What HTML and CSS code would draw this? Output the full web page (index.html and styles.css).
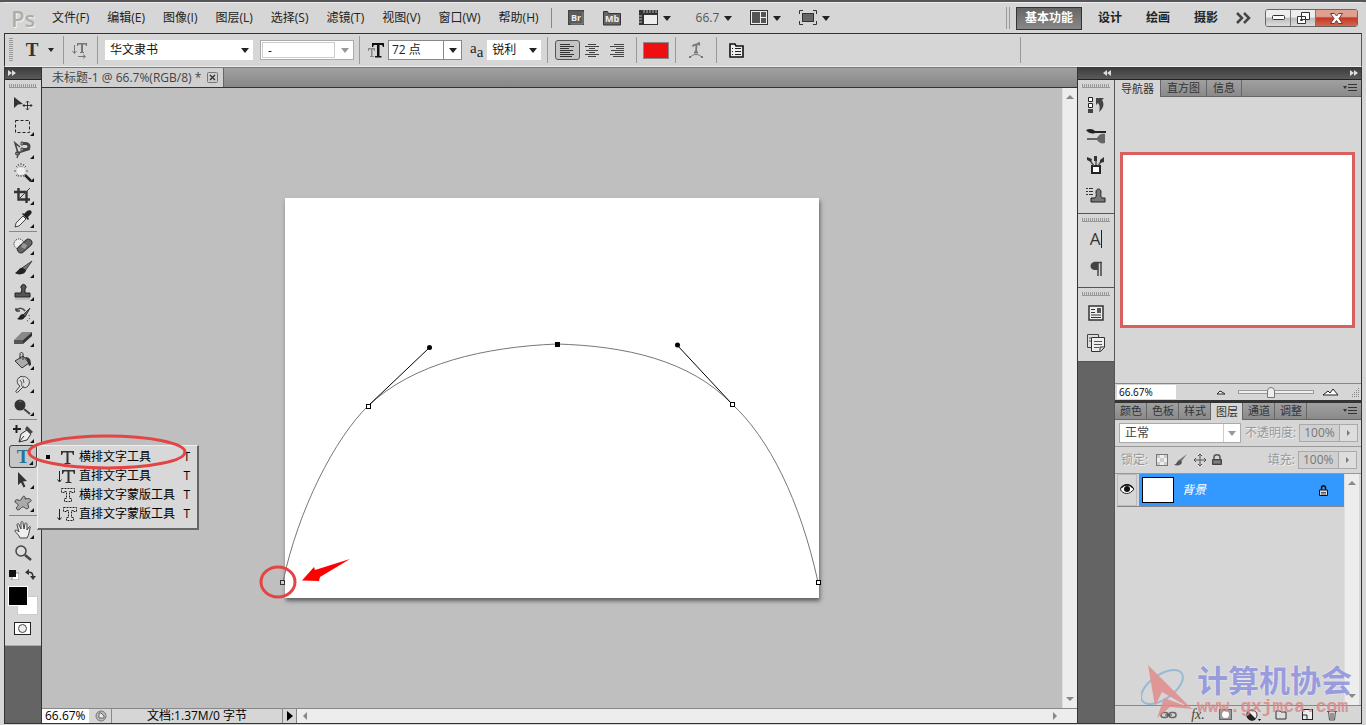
FILE: index.html
```html
<!DOCTYPE html>
<html lang="zh-CN">
<head>
  <meta charset="UTF-8">
  <meta name="viewport" content="width=device-width, initial-scale=1.0">
  <title>未标题-1 @ 66.7%(RGB/8) *</title>
  <link rel="stylesheet" href="styles.css">
</head>
<body>

  <header class="menubar">
    <span class="logo">Ps</span>
    <nav class="menus">
      <button>文件(F)</button>
      <button>编辑(E)</button>
      <button>图像(I)</button>
      <button>图层(L)</button>
      <button>选择(S)</button>
      <button>滤镜(T)</button>
      <button>视图(V)</button>
      <button>窗口(W)</button>
      <button>帮助(H)</button>
    </nav>
    <div class="app-tools">
      <button aria-label="Bridge"><svg width="16" height="16" viewBox="0 0 16 16"><rect x=".5" y=".5" width="15" height="14" fill="#5a5a5a" stroke="#444"/><path d="M15 2v12H3" fill="none" stroke="#8a8a8a"/><text x="3" y="11" class="badge-text">Br</text></svg></button>
      <button aria-label="Mini Bridge" class="mb"><svg width="18" height="16" viewBox="0 0 18 16"><path d="M.5 15V1.500h4l1 2h12V15z" fill="#666" stroke="#333"/><text x="2" y="12" class="badge-text">Mb</text></svg></button>
      <button aria-label="查看额外内容" class="drop ruler"><svg width="19" height="16" viewBox="0 0 19 16"><path d="M0 0h19v15H0z" fill="#333"/><path d="M5 5h13v9H5z" fill="#eee"/><path d="M5 0v3M8 0v3M11 0v3M14 0v3M17 0v3M0 6h3M0 9h3M0 12h3" stroke="#bbb"/></svg></button>
      <button class="drop zoom-level">66.7</button>
      <button aria-label="排列文档" class="drop"><svg width="18" height="16" viewBox="0 0 18 16"><rect x=".5" y=".5" width="17" height="14" fill="#eee" stroke="#333"/><path d="M2 2h8v11H2zM11 2h5v5h-5zM11 8h5v5h-5z" fill="#555"/></svg></button>
      <button aria-label="屏幕模式" class="drop"><svg width="18" height="16" viewBox="0 0 18 16"><rect x="3.500" y="3.500" width="11" height="8" fill="#666" stroke="#333"/><path d="M.5 4V.5H4M14 .5h3.500V4M17.500 11v3.500H14M4 14.500H.5V11" fill="none" stroke="#333"/></svg></button>
    </div>
    <div class="workspaces">
      <button class="active">基本功能</button>
      <button>设计</button>
      <button>绘画</button>
      <button>摄影</button>
      <button class="more" aria-label="更多"><svg width="15" height="12" viewBox="0 0 15 12"><path d="M1 1l5 5-5 5M8 1l5 5-5 5" fill="none" stroke="#444" stroke-width="2.500"/></svg></button>
    </div>
    <div class="window-buttons">
      <button aria-label="最小化"><svg width="13" height="6" viewBox="0 0 13 6"><rect x=".5" y=".5" width="12" height="4" rx="1" fill="#fff" stroke="#333"/></svg></button>
      <button aria-label="还原"><svg width="13" height="12" viewBox="0 0 13 12"><path d="M4.500.5h8v7h-8zM.5 4.500h8v7h-8z" fill="#fff" stroke="#333"/><path d="M3.500 7.500h2v1h-2z" fill="#fff" stroke="#333"/></svg></button>
      <button class="close" aria-label="关闭"><svg width="13" height="11" viewBox="0 0 13 11"><path d="M.5.5h4l2 2.500 2-2.500h4L9 5.500l3.500 5h-4l-2-3-2 3h-4L4 5.500z" fill="#fff" stroke="#6d3a34"/></svg></button>
    </div>
  </header>

  <section class="options">
    <i class="grip-v"></i>
    <button class="tool-preset drop" aria-label="文字工具"><span class="serif-t">T</span></button>
    <button class="orient" aria-label="更改文本方向"><svg width="17" height="17" viewBox="0 0 17 17"><path d="M2.500 3v8M.5 9l2 2.500 2-2.500M6 14.500h7M11 12.500l2.500 2-2.500 2" fill="none" stroke="#777"/><path d="M5 1h10v3h-1l-.5-1.500H11V10h1v1H8v-1h1V2.500H6.500L6 4H5z" fill="#777"/></svg></button>
    <label class="combo family"><select aria-label="字体"><option>华文隶书</option></select></label>
    <label class="combo face"><select aria-label="字体样式" disabled><option>-</option></select></label>
    <label class="size" for="fontSize"><svg width="17" height="15" viewBox="0 0 17 15"><path d="M4 0h12v4h-1l-1-2h-2.500v11h2v1.500H7V13h2V2H6L5 4H4z" fill="#111"/><path d="M0 5h7v3H6V6.500H4.500V13H6v1H2v-1h1V6.500H1V8H0z" fill="#888"/></svg></label>
    <div class="size-box"><input id="fontSize" value="72 点"><button aria-label="字号列表"></button></div>
    <span class="aa"><span>a</span><span>a</span></span>
    <label class="combo sharp"><select aria-label="消除锯齿"><option>锐利</option></select></label>
    <div class="aligns">
      <button class="on" aria-label="左对齐"><svg width="15" height="13" viewBox="0 0 15 13"><path d="M0 .5h10M0 2.500h14M0 4.500h9M0 6.500h13M0 8.500h10M0 10.500h14M0 12.500h12" stroke="#333"/></svg></button>
      <button aria-label="居中"><svg width="15" height="13" viewBox="0 0 15 13"><path d="M3 .5h8M0 2.500h14M4 4.500h6M1 6.500h12M4 8.500h6M0 10.500h14M3 12.500h8" stroke="#444"/></svg></button>
      <button aria-label="右对齐"><svg width="15" height="13" viewBox="0 0 15 13"><path d="M4 .5h10M0 2.500h14M6 4.500h8M1 6.500h13M5 8.500h9M0 10.500h14M3 12.500h11" stroke="#444"/></svg></button>
    </div>
    <div class="opt-cell"><button class="color" aria-label="文本颜色"></button></div>
    <div class="opt-cell"><button aria-label="变形文字"><svg width="16" height="17" viewBox="0 0 16 17"><path d="M4.500 4.500C6 2 9 3.500 11 1l.5 2.500M8.500 3L8 10M6 10.500h4" fill="none" stroke="#777" stroke-width="1.800"/><path d="M2 15.500c3-4 9-4 12 0" fill="none" stroke="#777"/><path d="M1 14h2v2H1zM13 14h2v2h-2z" fill="#777"/></svg></button></div>
    <div class="opt-cell last"><button aria-label="字符面板"><svg width="15" height="15" viewBox="0 0 15 15"><path d="M1 14V1h5l1 2h7v11z" fill="#eee" stroke="#111" stroke-width="1.600"/><path d="M3 5.500h1M3 8.500h1M3 11.500h1M6 5.500h6M6 8.500h6M6 11.500h6" stroke="#222"/></svg></button></div>
  </section>

  <main class="workspace">

    <aside class="toolbar">
      <div class="dark-head"><svg width="8" height="6" viewBox="0 0 8 6"><path d="M0 0l4 3-4 3zM4 0l4 3-4 3z" fill="#ddd"/></svg></div>
      <div class="tools">
        <i class="grip-h"></i>
        <button class="tool solo" aria-label="移动"><svg viewBox="0 0 20 20"><path d="M1 3l9 7-5 .5L1 14z" fill="#333"/><path d="M14.500 7v9M10 11.500h9M13 8.500l1.500-1.500L16 8.500M13 14.500l1.500 1.500 1.500-1.500M11.500 10L10 11.500l1.500 1.500M17.500 10l1.500 1.500-1.500 1.500" fill="none" stroke="#333"/></svg></button>
        <button class="tool" aria-label="选框"><svg viewBox="0 0 20 20"><rect x="2.500" y="3.500" width="14" height="12" fill="none" stroke="#222" stroke-dasharray="3 2"/></svg></button>
        <button class="tool" aria-label="套索"><svg viewBox="0 0 20 20"><path d="M7 7L2 3l3 10 12-4" fill="none" stroke="#444" stroke-width="1.600"/><path d="M5 12c-3 0-3 3 0 3 2-1 2-3 0-3M5 15l-1 3" fill="none" stroke="#444" stroke-width="1.300"/><path d="M8 2h5c6 0 6 9 0 9H8V8h5c2 0 2-3 0-3H8z" fill="#444"/><path d="M8 2h2v3H8zM8 8h2v3H8z" fill="#ccc" stroke="#444"/></svg></button>
        <button class="tool" aria-label="魔棒"><svg viewBox="0 0 20 20"><path d="M8 0v15M1 8h14M3 3l10 10M13 3L3 13M5 1l6 13M11 1L5 14" stroke="#555" stroke-dasharray="2 1"/><circle cx="8" cy="8" r="4" fill="#eee"/><path d="M12 12l6 6" stroke="#222" stroke-width="2.500"/></svg></button>
        <button class="tool" aria-label="裁剪"><svg viewBox="0 0 20 20"><path d="M5.500 2v11.500H17M1 6h12.500v11" fill="none" stroke="#333" stroke-width="2.400"/><path d="M6 13L17 2" stroke="#444"/></svg></button>
        <button class="tool" aria-label="吸管"><svg viewBox="0 0 20 20"><path d="M2 18l1-4 7-7 3 3-7 7z" fill="#eee" stroke="#444"/><path d="M9 5l6 6 1-1-1-2 3-3c2-3-1-5-4-3l-3 3-1-1z" fill="#222"/></svg></button>
        <hr>
        <button class="tool" aria-label="修复画笔"><svg viewBox="0 0 20 20"><circle cx="6" cy="8" r="5" fill="#eee" stroke="#222" stroke-dasharray="1 1"/><rect x="3" y="7" width="17" height="7" rx="3.500" fill="#666" stroke="#333" transform="rotate(-42 11 10)"/><path d="M8 11l4 2 2-4-4-2z" fill="#999"/></svg></button>
        <button class="tool" aria-label="画笔"><svg viewBox="0 0 20 20"><path d="M19 2l-10 7 3 3z" fill="#777" stroke="#444"/><path d="M10 9c-4-1-4 3-8 5 4 3 11 1 11-3z" fill="#222"/></svg></button>
        <button class="tool" aria-label="图章"><svg viewBox="0 0 20 20"><path d="M2 11h6l1-4a2.500 2.500 0 1 1 3 0l0 4h5v4H2z" fill="#555" stroke="#222"/><path d="M2 17h15" stroke="#aaa"/></svg></button>
        <button class="tool" aria-label="历史记录画笔"><svg viewBox="0 0 20 20"><path d="M3 6c3-4 7-3 9 0M3 6V3M3 6h4" fill="none" stroke="#444" stroke-width="1.500"/><path d="M17 3l-7 7 2 2z" fill="#666" stroke="#333"/><path d="M10 9c-3 0-3 3-6 5 4 2 8 0 8-3z" fill="#222"/><path d="M14 16c3-1 3-4 2-6" fill="none" stroke="#444" stroke-dasharray="1 2"/></svg></button>
        <button class="tool" aria-label="橡皮擦"><svg viewBox="0 0 20 20"><path d="M1 12l8-8h10l-9 8z" fill="#888"/><path d="M1 12h9v4H1z" fill="#555"/><path d="M10 12l9-8v4l-9 8z" fill="#333"/></svg></button>
        <button class="tool" aria-label="油漆桶"><svg viewBox="0 0 20 20"><path d="M2 10l8-5 6 7-7 5z" fill="#aaa" stroke="#333"/><path d="M7 8V3c0-2 3-2 3 0v6" fill="none" stroke="#333"/><path d="M12 6c4 0 6 2 6 8l-2 1-2-6z" fill="#333"/></svg></button>
        <button class="tool" aria-label="涂抹"><svg viewBox="0 0 20 20"><path d="M3 17l4-5c-4-2-3-8-1-8 1-2 3-2 4-1 2-1 3 0 4 1 3 1 3 6 1 8-2 2-4 2-5 1l-5 5c-1 1-3 0-2-1z" fill="#ddd" stroke="#444"/><path d="M7 6l2 3M10 5l1 4M9 9c-1 3 0 4 2 3" fill="none" stroke="#555"/></svg></button>
        <button class="tool" aria-label="减淡"><svg viewBox="0 0 20 20"><circle cx="7" cy="8" r="5.500" fill="#333"/><path d="M6 5c1-1 2-1 3 0" fill="none" stroke="#777"/><path d="M11 12l6 5" stroke="#444" stroke-width="2"/></svg></button>
        <hr>
        <button class="tool" aria-label="钢笔"><svg viewBox="0 0 20 20"><path d="M0 5h8M3.500 1v8" stroke="#222" stroke-width="2"/><path d="M6 18l2-8 6-4 4 4-4 6zM6 18l5-6" fill="#eee" stroke="#333"/><path d="M14 2l6 6-3 2-5-5z" fill="#444"/></svg></button>
        <div class="tool-group">
          <button class="tool picked" aria-label="文字"><span class="serif-t">T</span></button>
          <menu class="flyout">
            <li><button class="current"><i class="dot"></i><svg width="20" height="16" viewBox="0 0 20 16"><path d="M4 2h13v4h-1l-1-2.500h-3.500V14h2v1h-6v-1h2V3.500H6L5 6H4z" fill="#333"/></svg><span>横排文字工具</span><kbd>T</kbd></button></li>
            <li><button><i class="dot"></i><svg width="20" height="16" viewBox="0 0 20 16"><path d="M2.500 3v11M.5 11.500l2 2.500 2-2.500" fill="none" stroke="#222"/><path d="M5 2h13v4h-1l-1-2.500h-3.500V14h2v1h-6v-1h2V3.500H7L6 6H5z" fill="#333"/></svg><span>直排文字工具</span><kbd>T</kbd></button></li>
            <li><button><i class="dot"></i><svg width="20" height="16" viewBox="0 0 20 16"><path d="M4.500 1.500h13v4h-3v-1h-2v7h2v3h-7v-3h2v-7h-2v1h-3z" fill="#ddd" stroke="#222" stroke-dasharray="2 1"/></svg><span>横排文字蒙版工具</span><kbd>T</kbd></button></li>
            <li><button><i class="dot"></i><svg width="20" height="16" viewBox="0 0 20 16"><path d="M2.500 3v11M.5 11.500l2 2.500 2-2.500" fill="none" stroke="#222"/><path d="M6.500 1.500h13v4h-3v-1h-2v7h2v3h-7v-3h2v-7h-2v1h-3z" fill="#ddd" stroke="#222" stroke-dasharray="2 1"/></svg><span>直排文字蒙版工具</span><kbd>T</kbd></button></li>
          </menu>
          <svg class="ring" viewBox="0 0 160 36"><ellipse cx="80" cy="18" rx="78" ry="16" fill="none" stroke="#e34545" stroke-width="3"/></svg>
        </div>
        <button class="tool" aria-label="路径选择"><svg viewBox="0 0 20 20"><path d="M5 2l9 9-4 .5 2.500 5-2 1L8 12.500 5 15z" fill="#333"/></svg></button>
        <button class="tool" aria-label="自定形状"><svg viewBox="0 0 20 20"><path d="M9 5c1-3 4-2 3 1 3-1 7 0 6 2s-4 1-3 4c2 3-1 5-3 3s-3-1-5 1-5 0-3-2 1-3-1-4-1-4 2-3 3 0 4-2z" fill="#aaa" stroke="#444"/></svg></button>
        <hr>
        <button class="tool" aria-label="抓手"><svg viewBox="0 0 20 20"><path d="M7 18c-1-3-4-5-5-7 0-2 2-1 4 1L4 5c0-2 2-2 2 0l2 4V3c0-2 2-2 2 0l1 6 1-5c0-2 2-1 2 0v6l2-3c1-1 2 0 1 1-1 4-1 7-3 10z" fill="#eee" stroke="#444"/></svg></button>
        <button class="tool solo" aria-label="缩放"><svg viewBox="0 0 20 20"><circle cx="8" cy="8" r="5" fill="#ddd" stroke="#444" stroke-width="1.500"/><path d="M12 12l6 5" stroke="#444" stroke-width="2.500"/></svg></button>
        <div class="swatch-row">
          <button aria-label="默认颜色"><svg width="10" height="10" viewBox="0 0 10 10"><path d="M3 3h7v7H3z" fill="#fff" stroke="#888"/><path d="M0 0h7v7H0z" fill="#111"/></svg></button>
          <button aria-label="切换颜色"><svg width="11" height="11" viewBox="0 0 11 11"><path d="M2 3.500c5-1 6 1 6 5" fill="none" stroke="#333" stroke-width="1.500"/><path d="M4 0v6L0 3.500zM5 7h6l-3 4z" fill="#333"/></svg></button>
        </div>
        <div class="colors"><button class="fore" aria-label="前景色"></button><button class="back" aria-label="背景色"></button></div>
        <button class="mask" aria-label="快速蒙版"><svg width="17" height="13" viewBox="0 0 17 13"><rect x=".5" y=".5" width="16" height="12" fill="#fff" stroke="#222"/><circle cx="8.500" cy="6.500" r="4" fill="#eee" stroke="#444"/></svg></button>
      </div>
    </aside>

    <section class="document">
      <div class="tabs"><div class="doc-tab">未标题-1 @ 66.7%(RGB/8) *<button aria-label="关闭标签"><svg width="11" height="11" viewBox="0 0 11 11"><rect x=".5" y=".5" width="10" height="10" rx="1" fill="#ccc" stroke="#777"/><path d="M3 3l5 5M8 3L3 8" stroke="#333" stroke-width="1.400"/></svg></button></div></div>
      <div class="view">
        <div class="stage">
          <div class="paper">
            <svg class="path-layer" viewBox="0 0 534 400">
              <g fill="none" stroke="#777" stroke-width="1">
                <path d="M-2 384C13 312 50 240 83 208C128 165 200 149 272 146C340 148 405 162 447 206C484 240 515 302 533 384"/>
                <path d="M83 208L144 150M447 206L392 147" stroke="#000"/>
              </g>
              <circle cx="144.500" cy="149.500" r="2.500"/>
              <circle cx="392.500" cy="147" r="2.500"/>
              <rect x="270" y="144" width="5" height="5"/>
              <g fill="#fff" stroke="#000">
                <rect x="81.500" y="206.500" width="4" height="4"/>
                <rect x="445.500" y="204.500" width="4" height="4"/>
                <rect x="531.500" y="382.500" width="4" height="4"/>
                <rect x="-4.500" y="382.500" width="4" height="4" stroke="#333" fill="#ccc"/>
              </g>
              <ellipse cx="-7" cy="384" rx="17" ry="15" fill="none" stroke="#e34545" stroke-width="3"/>
              <path d="M17 382.500L29 369L30 372L65 361L35 379L34 383z" fill="#f00"/>
            </svg>
          </div>
        </div>
        <div class="scroll-v"><i class="up"></i><i class="down"></i></div>
      </div>
      <footer class="status">
        <input class="status-zoom" aria-label="缩放比例" value="66.67%">
        <span class="status-icon"><svg width="12" height="12" viewBox="0 0 12 12"><circle cx="6" cy="6" r="5" fill="#bbb" stroke="#777"/><path d="M4 3h2l3 3v2H4z" fill="#eee" stroke="#666"/></svg></span>
        <span class="doc-info">文档:1.37M/0 字节</span>
        <button class="play" aria-label="状态菜单"></button>
        <div class="scroll-h"><i class="left"></i><i class="right"></i></div>
      </footer>
    </section>

    <aside class="side">
      <div class="dark-head both"><svg width="8" height="6" viewBox="0 0 8 6"><path d="M4 0L0 3l4 3zM8 0L4 3l4 3z" fill="#ddd"/></svg><svg width="8" height="6" viewBox="0 0 8 6"><path d="M0 0l4 3-4 3zM4 0l4 3-4 3z" fill="#ddd"/></svg></div>
      <div class="side-body">
        <div class="dock">
          <div class="dock-group">
            <i class="grip-h"></i>
            <button aria-label="历史记录"><svg viewBox="0 0 20 20"><path d="M2.500 2.500h4v4h-4zM2.500 8.500h4v4h-4z" fill="#fff" stroke="#222"/><path d="M2 14h5v4H2z" fill="#444"/><path d="M10 3h8l-2 2c3 4 1 9-3 12 1-4 1-7-1-9l-2 2z" fill="#444"/></svg></button>
            <button aria-label="画笔预设"><svg viewBox="0 0 20 20"><path d="M0 5c4-2 7-1 9 1h11v2H9c-2 1-6 1-9-3z" fill="#222"/><path d="M1 13h10c2-4 5-5 8-4v9c-3 1-6 0-8-3H1z" fill="#666"/></svg></button>
            <button aria-label="画笔"><svg viewBox="0 0 20 20"><path d="M6 11h8v7H6z" fill="#fff" stroke="#222" stroke-width="2"/><path d="M8 11L3 4M10 10V2M12 11l4-6" stroke="#555" stroke-width="1.500"/><path d="M1 2l5 2-1 3-4-2zM8 1h3v5H8zM14 5l4-3v5l-4 1z" fill="#333"/></svg></button>
            <button aria-label="仿制源"><svg viewBox="0 0 20 20"><path d="M0 3.500h2M0 6.500h2M0 9.500h2M3 3.500h4M3 6.500h4M3 9.500h4" stroke="#333"/><path d="M5 13h4c2-2 1-4 1-6 0-4 5-4 5 0 0 2-1 4 1 6h3v4H5z" fill="#777" stroke="#222"/></svg></button>
          </div>
          <div class="dock-group">
            <i class="grip-h"></i>
            <button aria-label="字符" class="char"><span>A</span></button>
            <button aria-label="段落"><svg viewBox="0 0 20 20"><path d="M15 4v13M12 4v13M8 3.500h8" fill="none" stroke="#444" stroke-width="1.500"/><path d="M12 3H9c-6 0-6 8 0 8h3z" fill="#444"/></svg></button>
          </div>
          <div class="dock-group">
            <i class="grip-h"></i>
            <button aria-label="注释"><svg viewBox="0 0 20 20"><rect x="3" y="3" width="14" height="14" fill="#eee" stroke="#333" stroke-width="1.500"/><path d="M5 6.500h4M5 9.500h4M5 12h10M5 14.500h10" stroke="#333"/><path d="M11 5h4v5h-4z" fill="#555"/></svg></button>
            <button aria-label="图层复合"><svg viewBox="0 0 20 20"><path d="M1.500 1.500h11v13h-11z" fill="#ddd" stroke="#444"/><path d="M5.500 4.500h13v10l-4 4h-9zM18 14h-4v4" fill="#eee" stroke="#333"/><path d="M8 8.500h8M8 11.500h8M8 14.500h5M3 5h2M3 8h2" stroke="#555"/></svg></button>
          </div>
        </div>

        <div class="panels">
          <section class="panel navigator">
            <div class="panel-tabs"><button class="on">导航器</button><button>直方图</button><button>信息</button><i class="panel-menu"></i></div>
            <div class="nav-view"><div class="nav-preview"></div></div>
            <div class="nav-foot">
              <input class="nav-zoom" aria-label="导航器缩放" value="66.67%">
              <svg width="10" height="6" viewBox="0 0 10 6"><path d="M1 5l3-3 2 1 3 2z" fill="#fff" stroke="#222"/></svg>
              <input type="range" aria-label="缩放滑块" value="43">
              <svg width="17" height="8" viewBox="0 0 17 8"><path d="M1 7l5-4 2 2 3-4 5 6z" fill="#fff" stroke="#222"/></svg>
              <svg class="corner" width="9" height="9" viewBox="0 0 9 9"><path d="M8.500 0v9M6.500 2v7M4.500 4v5M2.500 6v3" stroke="#888" stroke-dasharray="1 1"/></svg>
            </div>
          </section>

          <section class="panel layers">
            <div class="panel-tabs compact"><button>颜色</button><button>色板</button><button>样式</button><button class="on">图层</button><button>通道</button><button>调整</button><i class="panel-menu"></i></div>
            <div class="layer-row">
              <label class="combo blend"><select aria-label="混合模式"><option>正常</option></select></label>
              <label class="dim" for="opacity">不透明度:</label>
              <div class="percent"><input id="opacity" value="100%" disabled><button disabled aria-label="不透明度滑块"></button></div>
            </div>
            <div class="layer-row">
              <span class="dim lock-label">锁定:</span>
              <div class="locks">
                <button aria-label="锁定透明像素"><svg width="12" height="12" viewBox="0 0 12 12"><rect x=".5" y=".5" width="11" height="11" fill="#eee" stroke="#777"/><path d="M1 1h3v3H1zM8 1h3v3H8zM4 4h4v4H4zM1 8h3v3H1zM8 8h3v3H8z" fill="#ccc"/></svg></button>
                <button aria-label="锁定图像像素"><svg width="14" height="12" viewBox="0 0 14 12"><path d="M13 0L5 6l2 2z" fill="#777"/><path d="M6 6c-3 0-2 3-6 5 4 1 8 0 8-3z" fill="#555"/></svg></button>
                <button aria-label="锁定位置"><svg width="12" height="12" viewBox="0 0 12 12"><path d="M6 0v12M0 6h12M4 2l2-2 2 2M4 10l2 2 2-2M2 4L0 6l2 2M10 4l2 2-2 2" fill="none" stroke="#555"/></svg></button>
                <button aria-label="锁定全部"><svg width="10" height="12" viewBox="0 0 10 12"><path d="M2 6V3c0-3 6-3 6 0v3" fill="none" stroke="#555" stroke-width="1.500"/><path d="M.5 5.500h9v5h-9z" fill="#666" stroke="#444"/><path d="M2 8h6" stroke="#999"/></svg></button>
              </div>
              <label class="dim" for="fill">填充:</label>
              <div class="percent"><input id="fill" value="100%" disabled><button disabled aria-label="填充滑块"></button></div>
            </div>
            <div class="layer-area">
              <div class="layer-list">
                <div class="layer">
                  <button class="eye" aria-label="显示图层"><svg width="14" height="12" viewBox="0 0 14 12"><path d="M0 5c3-5 10-5 14 0-4 6-11 6-14 0z" fill="#fff" stroke="#222"/><circle cx="7" cy="5" r="3" fill="#111"/><path d="M1 4c4-5 9-4 12 0" fill="none" stroke="#111" stroke-width="1.500"/></svg></button>
                  <div class="layer-main">
                    <i class="thumb"></i>
                    <em>背景</em>
                    <svg width="9" height="11" viewBox="0 0 9 11"><path d="M2.500 5V3c0-3 4-3 4 0v2" fill="none" stroke="#111" stroke-width="1.500"/><path d="M.5 5h8v5.500h-8z" fill="#ddd" stroke="#111"/><path d="M2 7.500h5M2 9h5" stroke="#555"/></svg>
                  </div>
                </div>
              </div>
              <div class="scroll-v"><i class="up"></i><i class="down"></i></div>
            </div>
            <div class="layer-foot">
              <button aria-label="链接图层"><svg width="17" height="8" viewBox="0 0 17 8"><rect x="1" y="1.500" width="7" height="5" rx="2.500" fill="none" stroke="#666" stroke-width="1.500"/><rect x="9" y="1.500" width="7" height="5" rx="2.500" fill="none" stroke="#666" stroke-width="1.500"/><path d="M5 4h7" stroke="#444"/></svg></button>
              <button aria-label="图层样式" class="fx">fx.</button>
              <button aria-label="图层蒙版"><svg width="13" height="11" viewBox="0 0 13 11"><rect x=".5" y=".5" width="12" height="10" fill="#999" stroke="#666"/><circle cx="6.500" cy="5.500" r="3.500" fill="#fff"/></svg></button>
              <button aria-label="调整图层"><svg width="15" height="12" viewBox="0 0 15 12"><circle cx="6" cy="6" r="5" fill="#eee" stroke="#333"/><path d="M2 2l8 8A5 5 0 0 1 2 2z" fill="#222"/><path d="M12 10h3l-1.500 2z"/></svg></button>
              <button aria-label="新建组"><svg width="12" height="11" viewBox="0 0 12 11"><path d="M1 10V2h4l1 1h5v7z" fill="#ddd" stroke="#333"/></svg></button>
              <button aria-label="新建图层"><svg width="11" height="11" viewBox="0 0 11 11"><rect x=".5" y=".5" width="10" height="10" fill="#eee" stroke="#222"/><path d="M1 6h4v4" fill="none" stroke="#222"/></svg></button>
              <button aria-label="删除图层"><svg width="10" height="12" viewBox="0 0 10 12"><path d="M0 2.500h10M3.500 1h3M1.500 3l1 8h5l1-8M4 4v6M6 4v6" fill="none" stroke="#555"/></svg></button>
            </div>
            <div class="watermark">
              <svg width="56" height="58" viewBox="0 0 56 58"><ellipse cx="21" cy="24" rx="24" ry="12" transform="rotate(-35 21 24)" fill="none" stroke="#8fb4d6" stroke-width="2"/><path d="M7 2L51 46L21 29L14 43z" fill="#e08c8c"/><path d="M23 35L53 46L29 44L16 55z" fill="#e08c8c"/></svg>
              <div><strong>计算机协会</strong><b>www.gxjmca.com</b></div>
            </div>
          </section>
        </div>
      </div>
    </aside>

  </main>

</body>
</html>
```
FILE: styles.css
```css
* {
  box-sizing: border-box;
}
body {
  margin: 0;
  height: 100vh;
  padding: 0 4px 1px;
  display: flex;
  flex-direction: column;
  overflow: hidden;
  background: #d6d6d6;
  border-top: 2px solid #55555a;
  font: 12px/16px "Open Sans", "Noto Sans CJK SC", sans-serif;
  color: #222;
}
button, input, select {
  font: inherit;
  color: inherit;
  margin: 0;
  padding: 0;
  border: 0;
  border-radius: 0;
  background: none;
  appearance: none;
}
button {
  display: flex;
  align-items: center;
  justify-content: center;
  flex: none;
}
svg {
  display: block;
  flex: none;
}

/* menu bar */
.menubar {
  height: 31px;
  flex: none;
  display: flex;
  align-items: center;
  border-top: 1px solid #eee;
}
.logo {
  width: 48px;
  padding-left: 7px;
  font-size: 22px;
  font-weight: 600;
  line-height: 28px;
  color: #adadad;
  text-shadow: 1px 1px 0 #f4f4f4;
}
.menus {
  display: flex;
  gap: 18px;
}
.app-tools {
  display: flex;
  align-items: center;
  height: 20px;
  margin-left: 12px;
  padding-left: 16px;
  border-left: 1px solid #888;
}
.badge-text {
  font: bold 9px "Open Sans", sans-serif;
  fill: #eee;
}
.mb {
  margin: 0 18px 0 19px;
}
.drop::after, .combo::after, .size-box button::after {
  content: "";
  border: 4px solid transparent;
  border-top: 5px solid #222;
  border-bottom: 0;
}
.drop {
  gap: 5px;
  margin-right: 18px;
}
.zoom-level {
  margin-left: 7px;
  color: #555;
}
.workspaces {
  display: flex;
  align-items: center;
  gap: 24px;
  margin-left: auto;
  padding-left: 6px;
  border-left: 4px double #999;
  height: 22px;
  font-weight: bold;
}
.workspaces .active {
  height: 23px;
  padding: 0 8px;
  margin-right: -8px;
  color: #fff;
  border: 1px solid #333;
  background: linear-gradient(#666, #888);
}
.workspaces .more {
  margin-left: -6px;
}
.window-buttons {
  display: flex;
  height: 18px;
  margin: 0 4px 0 14px;
  border: 1px solid #666;
  border-radius: 3px;
  overflow: hidden;
}
.window-buttons button {
  width: 25px;
  border-right: 1px solid #777;
  background: linear-gradient(#eee 45%, #bbb 50%, #ddd);
}
.window-buttons .close {
  width: 41px;
  border: 0;
  background: linear-gradient(#e0a090 40%, #c03a28 50%, #d8644c);
}

/* tool options */
.options {
  height: 34px;
  flex: none;
  display: flex;
  align-items: center;
  border: 1px solid #333;
  border-bottom-color: #eee;
  border-right-color: #555;
  padding-left: 4px;
}
.grip-v {
  width: 4px;
  height: 24px;
  background: repeating-linear-gradient(#999 0 1px, transparent 1px 2px);
}
.serif-t {
  font: bold 19px/22px "Liberation Serif", serif;
  color: #333;
}
.tool-preset {
  width: 51px;
  height: 28px;
  margin: 0;
  padding-left: 4px;
  gap: 10px;
  border-right: 1px solid #999;
}
.tool-preset::after {
  border-width: 4px 3px 0;
}
.orient {
  width: 34px;
  height: 28px;
  border-right: 1px solid #999;
}
.combo {
  display: flex;
  align-items: center;
  height: 20px;
  flex: none;
  padding-right: 4px;
  background: #fff;
}
.combo select {
  flex: 1;
  min-width: 0;
  height: 100%;
  padding-left: 5px;
  color: #111;
}
.family {
  width: 148px;
  margin-left: 7px;
}
.face {
  width: 94px;
  margin-left: 7px;
  border: 1px solid #aaa;
  padding: 1px 4px 1px 1px;
}
.face select {
  border: 1px solid #ccc;
  margin-right: 6px;
  opacity: 1;
}
.face::after, .blend::after {
  border-top-color: #999;
}
.size {
  height: 28px;
  display: flex;
  align-items: center;
  margin-left: 5px;
  padding: 0 3px 0 8px;
  border-left: 1px solid #999;
}
.size-box {
  display: flex;
  width: 74px;
  height: 20px;
  flex: none;
  border: 1px solid #888;
  background: #fff;
}
.size-box input {
  flex: 1;
  min-width: 0;
  padding-left: 3px;
}
.size-box button {
  width: 18px;
  border-left: 1px solid #888;
}
.aa {
  display: flex;
  margin: 0 4px 0 8px;
  font: 15px/14px "Liberation Serif", serif;
}
.aa span:first-child {
  margin-bottom: 4px;
}
.aa span:last-child {
  align-self: flex-end;
}
.sharp {
  width: 54px;
}
.aligns {
  display: flex;
  align-items: center;
  height: 26px;
  margin-left: 6px;
  padding: 0 6px 0 7px;
  border-left: 1px solid #999;
}
.aligns button {
  width: 25px;
  height: 20px;
}
.aligns .on {
  border: 1px solid #555;
  border-radius: 3px;
  background: #c4c4c4;
}
.opt-cell {
  display: flex;
  align-items: center;
  height: 26px;
  padding: 0 6px;
  border-left: 1px solid #999;
}
.opt-cell + .opt-cell {
  padding: 0 12px;
}
.opt-cell.last {
  width: 305px;
  border-right: 1px solid #999;
}
.color {
  width: 26px;
  height: 17px;
  border: 1px solid #888;
  background: #ee1010;
}

/* main area */
.workspace {
  flex: 1;
  min-height: 0;
  display: flex;
  border: 1px solid #333;
  border-top: 0;
}
.dark-head {
  height: 13px;
  flex: none;
  display: flex;
  align-items: center;
  padding: 0 3px;
  background: linear-gradient(#3c3c3c, #5a5a5a);
  border-bottom: 1px solid #222;
}
.dark-head.both {
  justify-content: space-between;
  padding-left: 25px;
}
.toolbar {
  width: 37px;
  flex: none;
  background: #646464;
  border-right: 1px solid #333;
}
.tools {
  background: #d6d6d6;
  padding: 4px 1px 10px;
  border-bottom: 1px solid #aaa;
}
.grip-h {
  display: block;
  width: 28px;
  height: 4px;
  margin: 0 auto 4px;
  background: repeating-linear-gradient(90deg, #999 0 1px, transparent 1px 2px);
  border-bottom: 1px dotted #999;
}
.tools hr {
  height: 1px;
  margin: 1px 3px 2px;
  border: 0;
  background: #888;
}
.tool {
  position: relative;
  width: 28px;
  height: 23px;
  margin-left: 3px;
}
.tool svg, .dock-group svg {
  width: 20px;
  height: 20px;
}
.tool::after {
  content: "";
  position: absolute;
  right: 3px;
  bottom: 2px;
  border: 2px solid #111;
  border-top-color: transparent;
  border-left-color: transparent;
}
.solo::after {
  display: none;
}
.tool-group {
  position: relative;
}
.picked {
  border: 1px solid #444;
  border-radius: 3px;
  background: #c6c6c6;
}
.picked .serif-t {
  color: #2a7199;
}
.flyout {
  position: absolute;
  z-index: 2;
  left: 31px;
  top: 0;
  width: 162px;
  margin: 0;
  padding: 1px 0 5px;
  list-style: none;
  background: #d8d8d8;
  border: 1px solid #eee;
  border-right: 2px solid #666;
  border-bottom: 2px solid #666;
}
.flyout button {
  width: 100%;
  height: 19px;
  padding: 0 7px 0 8px;
  color: #000;
}
.flyout span {
  flex: 1;
  margin-left: 2px;
  text-align: left;
}
.dot {
  width: 4px;
  height: 4px;
  margin-right: 7px;
}
.current .dot {
  background: #000;
}
.flyout kbd {
  font: inherit;
}
.ring {
  position: absolute;
  z-index: 3;
  left: 21px;
  top: -11px;
  width: 160px;
  height: 36px;
}
.swatch-row {
  display: flex;
  justify-content: space-between;
  padding: 5px 4px 6px 3px;
}
.colors {
  display: grid;
  grid-template: 10px 10px 9px / 9px 11px 10px;
  margin-left: 2px;
}
.fore {
  grid-area: 1 / 1 / 3 / 3;
  z-index: 1;
  border: 1px solid #fff;
  background: #000;
}
.back {
  grid-area: 2 / 2 / 4 / 4;
  border: 1px solid #ccc;
  background: #fff;
}
.mask {
  margin: 7px 0 0 8px;
}

/* document window */
.document {
  flex: 1;
  min-width: 0;
  display: flex;
  flex-direction: column;
}
.tabs {
  height: 21px;
  flex: none;
  display: flex;
  background: linear-gradient(#a0a0a0, #878787);
  border-top: 1px solid #777;
  border-bottom: 1px solid #333;
}
.doc-tab {
  display: flex;
  align-items: center;
  gap: 6px;
  padding: 0 5px 0 10px;
  background: #d0d0d0;
  border-right: 1px solid #666;
  color: #444;
}
.view {
  flex: 1;
  min-height: 0;
  display: flex;
}
.stage {
  flex: 1;
  display: flex;
  align-items: center;
  justify-content: center;
  background: #bfbfbf;
}
.paper {
  position: relative;
  width: 534px;
  height: 400px;
  background: #fff;
  box-shadow: 1px 3px 4px rgba(0,0,0,0.5);
}
.path-layer {
  position: absolute;
  inset: 0;
  overflow: visible;
}
.scroll-v {
  width: 15px;
  display: flex;
  flex-direction: column;
  justify-content: space-between;
  align-items: center;
  padding: 7px 0;
  background: #ededed;
  border-left: 1px solid #ddd;
}
.scroll-v i, .scroll-h i {
  border: 4px solid transparent;
}
.scroll-v .up {
  border-top: 0;
  border-bottom-color: #888;
}
.scroll-v .down {
  border-bottom: 0;
  border-top-color: #888;
}
.status {
  height: 15px;
  flex: none;
  display: flex;
  background: #d6d6d6;
  border-top: 1px solid #888;
  line-height: 14px;
  color: #000;
}
.status-zoom {
  width: 47px;
  padding-left: 3px;
  background: #fff;
}
.status-icon {
  width: 23px;
  padding: 1px 6px;
  border-right: 1px solid #888;
}
.doc-info {
  width: 171px;
  text-align: center;
  border-right: 1px solid #888;
}
.play {
  width: 14px;
  border-right: 1px solid #888;
}
.play::after {
  content: "";
  border: 5px solid transparent;
  border-left: 6px solid #000;
  border-right: 0;
}
.scroll-h {
  flex: 1;
  display: flex;
  align-items: center;
  justify-content: space-between;
  padding: 0 20px 0 6px;
  background: #ededed;
}
.scroll-h .left {
  border-left: 0;
  border-right-color: #888;
}
.scroll-h .right {
  border-right: 0;
  border-left-color: #888;
}

/* right side */
.side {
  width: 284px;
  flex: none;
  display: flex;
  flex-direction: column;
  border-left: 1px solid #333;
}
.side-body {
  flex: 1;
  min-height: 0;
  display: flex;
}
.dock {
  width: 36px;
  flex: none;
  background: #646464;
}
.dock-group {
  padding: 4px 0 3px;
  background: #d6d6d6;
  border-bottom: 1px solid #555;
}
.dock-group .grip-h {
  margin-bottom: 2px;
}
.dock-group button {
  width: 36px;
  height: 30px;
}
.char span {
  padding-right: 1px;
  border-right: 1px solid #222;
  font: 17px/18px "Open Sans", sans-serif;
  color: #333;
}
.panels {
  flex: 1;
  min-width: 0;
  display: flex;
  flex-direction: column;
  border-left: 1px solid #555;
}
.panel {
  display: flex;
  flex-direction: column;
  background: #d6d6d6;
}
.navigator {
  height: 323px;
  flex: none;
  border-bottom: 3px solid #333;
}
.panel-tabs {
  height: 17px;
  flex: none;
  display: flex;
  align-items: stretch;
  background: linear-gradient(#a0a0a0, #8a8a8a);
  border-bottom: 1px solid #666;
  font-size: 11px;
  color: #333;
}
.panel-tabs button {
  padding: 0 6px;
  border-right: 1px solid #666;
}
.panel-tabs.compact button {
  padding: 0 4px 0 5px;
}
.panel-tabs .on {
  height: 17px;
  background: #d6d6d6;
}
.panel-menu {
  display: flex;
  width: 14px;
  height: 8px;
  margin: 4px 4px 0 auto;
  background: repeating-linear-gradient(#333 0 1px, transparent 1px 3px) right / 9px 8px no-repeat;
}
.panel-menu::before {
  content: "";
  height: 0;
  margin-top: 2px;
  border: 2px solid transparent;
  border-top: 3px solid #333;
  border-bottom: 0;
}
.nav-view {
  flex: 1;
  display: flex;
  align-items: center;
  padding: 0 6px 0 5px;
  border-bottom: 1px solid #888;
}
.nav-preview {
  flex: 1;
  height: 176px;
  background: #fff;
  border: 3px solid #d95f5f;
}
.nav-foot {
  height: 16px;
  display: flex;
  align-items: center;
  padding: 0 2px;
}
.nav-zoom {
  width: 59px;
  height: 14px;
  padding-left: 2px;
  margin-right: 40px;
  background: #fff;
  font-size: 10px;
  color: #000;
}
.nav-foot input[type="range"] {
  width: 76px;
  height: 12px;
  margin: 0 8px 0 12px;
}
.nav-foot input::-webkit-slider-runnable-track {
  height: 4px;
  border: 1px solid #999;
  background: #eee;
}
.nav-foot input::-webkit-slider-thumb {
  appearance: none;
  width: 8px;
  height: 11px;
  margin-top: -4px;
  border: 1px solid #777;
  border-radius: 4px 4px 0 0;
  background: #eee;
}
.corner {
  margin-left: auto;
}
.layers {
  position: relative;
  flex: 1;
  min-height: 0;
}
.layer-row {
  height: 27px;
  flex: none;
  display: flex;
  align-items: center;
  padding: 0 4px;
  border-bottom: 1px solid #999;
}
.blend {
  width: 122px;
  height: 20px;
  margin-right: 4px;
  border: 1px solid #aaa;
}
.blend select {
  margin-right: 4px;
  border-right: 1px solid #ccc;
  color: #444;
}
.dim {
  color: #999;
  text-shadow: 1px 1px 0 #eee;
  margin-left: auto;
  margin-right: 3px;
  white-space: nowrap;
}
.lock-label {
  margin-left: 2px;
  margin-right: 8px;
}
.locks {
  display: flex;
  align-items: center;
  gap: 6px;
}
.percent {
  display: flex;
  width: 59px;
  height: 18px;
  flex: none;
  border: 1px solid #aaa;
}
.percent input {
  flex: 1;
  min-width: 0;
  padding-left: 4px;
  color: #777;
  background: #d0d0d0;
}
.percent button {
  width: 18px;
  border-left: 1px solid #aaa;
  background: #ddd;
}
.percent button::after {
  content: "";
  border: 3px solid transparent;
  border-left-color: #777;
  border-right: 0;
}
.layer-area {
  flex: 1;
  min-height: 0;
  display: flex;
  padding: 0 2px;
}
.layer-list {
  flex: 1;
}
.layer {
  height: 33px;
  display: flex;
  border-bottom: 1px solid #888;
}
.eye {
  width: 20px;
  margin-right: 2px;
  border: 1px solid #bbb;
}
.layer-main {
  flex: 1;
  display: flex;
  align-items: center;
  padding: 0 16px 0 3px;
  background: #3399ff;
  color: #fff;
}
.thumb {
  width: 32px;
  height: 26px;
  border: 1px solid #000;
  background: #fff;
}
.layer-main em {
  flex: 1;
  margin-left: 8px;
}
.layer-foot {
  height: 18px;
  flex: none;
  display: flex;
  align-items: center;
  justify-content: space-between;
  padding: 0 24px 0 45px;
  border-top: 1px solid #888;
}
.fx {
  font: italic 14px/14px "Liberation Serif", serif;
  color: #444;
}
.watermark {
  position: absolute;
  right: 9px;
  bottom: 2px;
  display: flex;
  opacity: .85;
  pointer-events: none;
}
.watermark div {
  display: flex;
  flex-direction: column;
  color: #8f93de;
}
.watermark strong {
  font-size: 31px;
  line-height: 35px;
  font-weight: 700;
  text-shadow: 0 0 2px #fff;
}
.watermark b {
  font: bold 18px/18px "Liberation Mono", monospace;
  color: #d98a8a;
}
```
